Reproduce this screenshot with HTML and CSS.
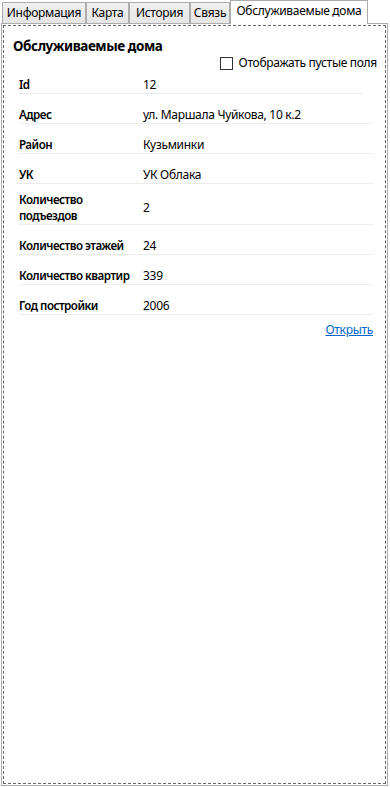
FILE: index.html
```html
<!DOCTYPE html>
<html lang="ru">
<head>
<meta charset="utf-8">
<title>Обслуживаемые дома</title>
<link rel="stylesheet" href="styles.css">
</head>
<body>
<div class="tabcontrol">
  <div class="tabstrip">
    <div class="tab tab-info">Информация</div>
    <div class="tab tab-map">Карта</div>
    <div class="tab tab-history">История</div>
    <div class="tab tab-link">Связь</div>
    <div class="tab tab-houses is-selected">Обслуживаемые дома</div>
  </div>
  <div class="panel">
    <div class="focus">
      <h1 class="title">Обслуживаемые дома</h1>
      <label class="check">
        <span class="check-box"></span>
        <span class="check-text">Отображать пустые поля</span>
      </label>
      <div class="rows">
        <div class="row row-short"><span class="label">Id</span><span class="value">12</span></div>
        <div class="row"><span class="label">Адрес</span><span class="value">ул. Маршала Чуйкова, 10 к.2</span></div>
        <div class="row"><span class="label">Район</span><span class="value">Кузьминки</span></div>
        <div class="row"><span class="label">УК</span><span class="value">УК Облака</span></div>
        <div class="row row-tall"><span class="label label-wrap">Количество подъездов</span><span class="value">2</span></div>
        <div class="row"><span class="label">Количество этажей</span><span class="value">24</span></div>
        <div class="row"><span class="label">Количество квартир</span><span class="value">339</span></div>
        <div class="row"><span class="label">Год постройки</span><span class="value">2006</span></div>
      </div>
      <div class="actions"><a class="open-link" href="#">Открыть</a></div>
    </div>
  </div>
</div>
</body>
</html>
```

FILE: styles.css
```css
* { box-sizing: border-box; }

html, body {
  margin: 0;
  padding: 0;
  background: #ffffff;
}

body {
  font-family: "Noto Sans", "Open Sans", sans-serif;
  font-size: 12px;
  line-height: 16px;
  letter-spacing: -0.3px;
  color: #000000;
  width: 390px;
  height: 787px;
  overflow: hidden;
}

.tabcontrol {
  display: flex;
  flex-direction: column;
  height: 787px;
}

.tabstrip {
  display: flex;
  align-items: flex-end;
  height: 23px;
  padding-left: 2px;
}

.tab {
  height: 21px;
  border: 1px solid #acacac;
  border-bottom: none;
  background: linear-gradient(#f0f0f0, #e5e5e5);
  display: flex;
  align-items: center;
  justify-content: center;
  padding-bottom: 1px;
  white-space: nowrap;
}

.tab-info { width: 84px; }
.tab-map { width: 43px; }
.tab-history { width: 61px; }
.tab-link { width: 40px; }

.tab-houses {
  width: 138px;
}

.tab.is-selected {
  height: 24px;
  margin-bottom: -1px;
  background: #ffffff;
  position: relative;
  z-index: 1;
  padding-bottom: 3px;
}

.panel {
  width: 387px;
  height: 763px;
  margin-left: 1px;
  border: 1px solid #acacac;
  padding: 1px;
  background: #ffffff;
}

.focus {
  height: 100%;
  border: 1px dashed #666666;
  padding: 11px 8px 0 9px;
}

.title {
  margin: 0;
  font-size: 13.5px;
  line-height: 18px;
  font-weight: 700;
  letter-spacing: -0.45px;
}

.check {
  display: flex;
  align-items: center;
  justify-content: flex-end;
  gap: 6px;
  height: 16px;
  margin-bottom: -7px;
}

.check-box {
  width: 13px;
  height: 13px;
  border: 1px solid #333333;
  background: #ffffff;
}

.rows {
  display: flex;
  flex-direction: column;
  margin: 0 4px 0 6px;
}

.row {
  display: flex;
  align-items: center;
  padding-top: 13px;
  border-bottom: 1px solid #ececec;
}

.row-short {
  margin-right: 10px;
}

.row-tall {
  padding-top: 8px;
}

.label {
  width: 124px;
  flex: none;
  font-size: 11.6px;
  font-weight: 600;
  letter-spacing: -0.5px;
  white-space: nowrap;
}

.label-wrap {
  white-space: normal;
  width: 110px;
  margin-right: 14px;
}

.value {
  flex: 1;
}

.actions {
  display: flex;
  justify-content: flex-end;
  margin: 7px 4px 0 0;
}

.open-link {
  color: #0066cc;
  text-decoration: underline;
}
```
